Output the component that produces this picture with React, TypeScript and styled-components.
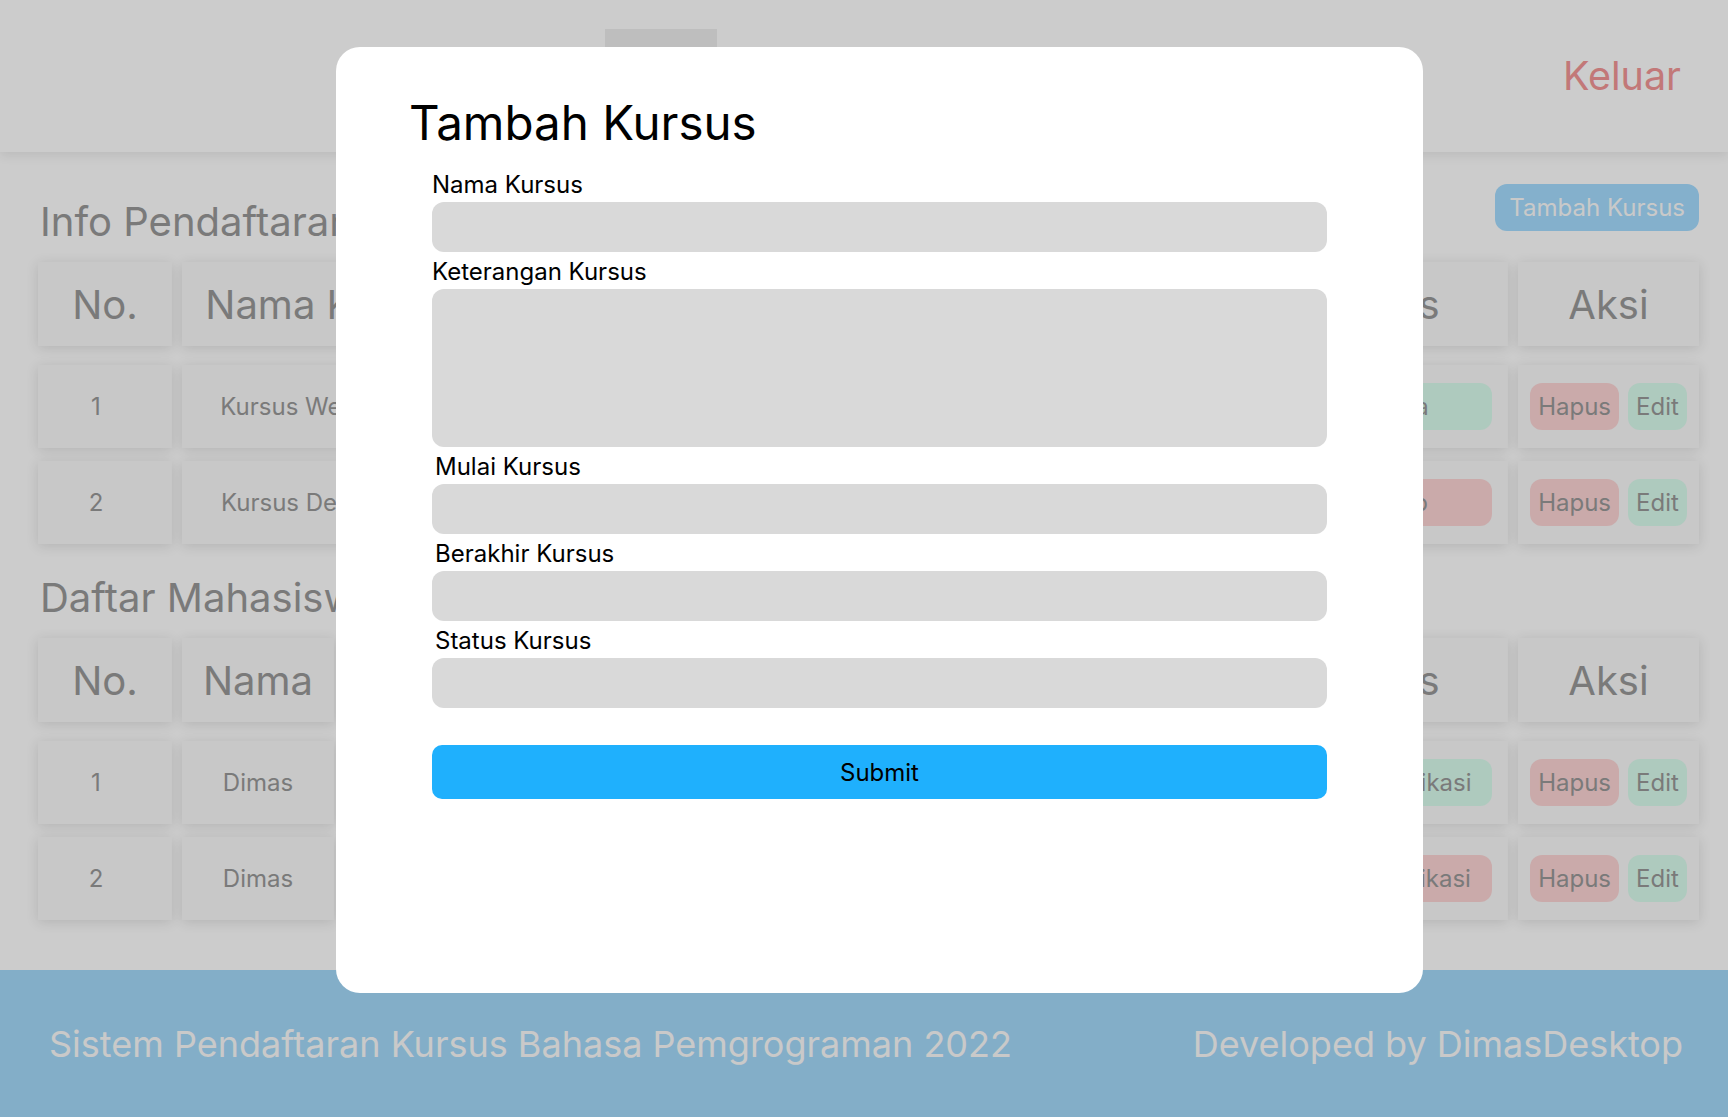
import styled, { createGlobalStyle } from 'styled-components';

const GlobalStyle = createGlobalStyle`
  * { box-sizing: border-box; }
  body {
    margin: 0;
    font-family: Inter, "Noto Sans", "Liberation Sans", sans-serif;
    background: #ffffff;
  }
`;

type Tone = 'ok' | 'bad';

const Page = styled.div`
  min-height: 100vh;
  display: flex;
  flex-direction: column;
  color: #999999;
`;

const Header = styled.header`
  height: 152px;
  display: grid;
  grid-template-columns: 1fr auto;
  align-items: center;
  padding: 0 47px 0 0;
  background: #ffffff;
  box-shadow: 0 4px 10px rgba(0, 0, 0, 0.08);
  position: relative;
  z-index: 1;
`;
const NavTab = styled.a`
  margin-left: 605px;
  width: 112px;
  height: 94px;
  display: flex;
  align-items: center;
  justify-content: center;
  background: #eeeeee;
  color: #999999;
  font-size: 24px;
  text-decoration: none;
`;
const Logout = styled.a`
  font-size: 39.5px;
  color: #f39696;
  text-decoration: none;
  cursor: pointer;
`;

const Main = styled.main`
  flex: 1;
  padding: 32px 29px 0 38px;
`;
const Section = styled.section`
  & + & {
    margin-top: 30px;
  }
`;
const SectionHead = styled.div`
  display: flex;
  justify-content: space-between;
  align-items: flex-start;
  margin-bottom: 16px;
`;
const Heading = styled.h2<{ $offset?: number }>`
  margin: ${(p) => p.$offset ?? 0}px 0 0 2px;
  font-size: 40px;
  font-weight: 400;
  line-height: 48px;
  color: #999999;
`;
const AddButton = styled.button`
  height: 47px;
  padding: 0 14px;
  border: none;
  border-radius: 12px;
  background: #a5ddff;
  color: #fcfcfc;
  font-family: inherit;
  font-size: 24px;
  cursor: pointer;
`;

const Grid = styled.div<{ $cols: string }>`
  display: grid;
  grid-template-columns: ${(p) => p.$cols};
  column-gap: 10px;
  row-gap: 13px;
`;
const HeadCell = styled.div`
  height: 84px;
  margin-bottom: 6px;
  display: flex;
  align-items: center;
  justify-content: center;
  background: #fafafa;
  box-shadow: 0 2px 12px rgba(0, 0, 0, 0.12);
  font-size: 40px;
  white-space: nowrap;
  overflow: hidden;
`;
const Cell = styled.div<{ $num?: boolean }>`
  height: 83px;
  padding: 0 ${(p) => (p.$num ? 34 : 16)}px 0 16px;
  display: flex;
  align-items: center;
  justify-content: center;
  gap: 9px;
  background: #fafafa;
  box-shadow: 0 2px 12px rgba(0, 0, 0, 0.12);
  font-size: 24px;
  white-space: nowrap;
  overflow: hidden;
`;
const Pill = styled.span<{ $tone: Tone; $wide?: boolean }>`
  height: 47px;
  padding: 0 8px;
  display: inline-flex;
  align-items: center;
  justify-content: center;
  flex: ${(p) => (p.$wide ? 1 : 'none')};
  border-radius: 12px;
  background: ${(p) => (p.$tone === 'ok' ? '#dafdee' : '#fdd5d5')};
  color: #999999;
  font-size: 24px;
  cursor: pointer;
`;

const Footer = styled.footer`
  height: 147px;
  padding: 0 45px 0 49px;
  display: flex;
  align-items: center;
  justify-content: space-between;
  background: #a4dafb;
  color: #fcfcfc;
  font-size: 36px;
`;

const Backdrop = styled.div`
  position: fixed;
  inset: 0;
  background: rgba(0, 0, 0, 0.2);
  z-index: 10;
`;
const Modal = styled.div`
  position: absolute;
  top: 47px;
  left: 336px;
  width: 1087px;
  height: 946px;
  padding: 47px 96px 0;
  border-radius: 24px;
  background: #ffffff;
  color: #000000;
`;
const Title = styled.h1`
  margin: 0 0 18px -23px;
  font-size: 47.5px;
  font-weight: 400;
  line-height: 58px;
`;
const Form = styled.form`
  display: flex;
  flex-direction: column;
  gap: 5px;
`;
const Field = styled.div`
  display: flex;
  flex-direction: column;
`;
const Label = styled.label<{ $indent?: boolean }>`
  margin: 0 0 3px ${(p) => (p.$indent ? 3 : 0)}px;
  font-size: 24px;
  line-height: 29px;
`;
const Input = styled.input`
  height: 50px;
  width: 100%;
  padding: 0 14px;
  border: none;
  border-radius: 12px;
  background: #d9d9d9;
  font-family: inherit;
  font-size: 22px;
  outline: none;
`;
const TextArea = styled.textarea`
  height: 158px;
  width: 100%;
  padding: 12px 14px;
  border: none;
  border-radius: 12px;
  background: #d9d9d9;
  font-family: inherit;
  font-size: 22px;
  resize: none;
  outline: none;
`;
const Submit = styled.button`
  margin-top: 32px;
  height: 54px;
  width: 100%;
  border: none;
  border-radius: 10px;
  background: #1fb0fd;
  color: #000000;
  font-family: inherit;
  font-size: 24px;
  cursor: pointer;
`;

type Row = { cells: string[]; status: string; tone: Tone };

const courseCols = '134px 298px 244px 244px 244px 256px 181px';
const courseHead = ['No.', 'Nama Kursus', 'Keterangan', 'Mulai', 'Berakhir', 'Status', 'Aksi'];
const courses: Row[] = [
  { cells: ['1', 'Kursus Web Design', 'Belajar HTML & CSS', '01-08-2022', '01-09-2022'], status: 'Tersedia', tone: 'ok' },
  { cells: ['2', 'Kursus Desain Web', 'Belajar UI/UX', '01-07-2022', '01-08-2022'], status: 'Tertutup', tone: 'bad' },
];

const studentCols = '134px 152px 444px 444px 256px 181px';
const studentHead = ['No.', 'Nama', 'Email', 'Kursus', 'Status', 'Aksi'];
const students: Row[] = [
  { cells: ['1', 'Dimas', 'dimas@gmail.com', 'Kursus Web Design'], status: 'Sudah Verifikasi', tone: 'ok' },
  { cells: ['2', 'Dimas', 'dimas@gmail.com', 'Kursus Desain Web'], status: 'Belum Verifikasi', tone: 'bad' },
];

function DataTable({ cols, head, rows }: { cols: string; head: string[]; rows: Row[] }) {
  return (
    <Grid $cols={cols}>
      {head.map((h) => (
        <HeadCell key={h}>{h}</HeadCell>
      ))}
      {rows.map((r) => [
        ...r.cells.map((c, i) => (
          <Cell key={`${r.cells[0]}-${i}`} $num={i === 0}>
            {c}
          </Cell>
        )),
        <Cell key={`${r.cells[0]}-status`}>
          <Pill $tone={r.tone} $wide>
            {r.status}
          </Pill>
        </Cell>,
        <Cell key={`${r.cells[0]}-aksi`}>
          <Pill $tone="bad">Hapus</Pill>
          <Pill $tone="ok">Edit</Pill>
        </Cell>,
      ])}
    </Grid>
  );
}

const fields = [
  { id: 'nama', label: 'Nama Kursus' },
  { id: 'ket', label: 'Keterangan Kursus', area: true },
  { id: 'mulai', label: 'Mulai Kursus', indent: true },
  { id: 'akhir', label: 'Berakhir Kursus', indent: true },
  { id: 'status', label: 'Status Kursus', indent: true },
];

export default function App() {
  return (
    <>
      <GlobalStyle />
      <Page>
        <Header>
          <NavTab>Kursus</NavTab>
          <Logout>Keluar</Logout>
        </Header>

        <Main>
          <Section>
            <SectionHead>
              <Heading $offset={14}>Info Pendaftaran Kursus</Heading>
              <AddButton>Tambah Kursus</AddButton>
            </SectionHead>
            <DataTable cols={courseCols} head={courseHead} rows={courses} />
          </Section>
          <Section>
            <SectionHead>
              <Heading>Daftar Mahasiswa</Heading>
            </SectionHead>
            <DataTable cols={studentCols} head={studentHead} rows={students} />
          </Section>
        </Main>

        <Footer>
          <span>Sistem Pendaftaran Kursus Bahasa Pemgrograman 2022</span>
          <span>Developed by DimasDesktop</span>
        </Footer>
      </Page>

      <Backdrop>
        <Modal role="dialog" aria-label="Tambah Kursus">
          <Title>Tambah Kursus</Title>
          <Form onSubmit={(e) => e.preventDefault()}>
            {fields.map((f) => (
              <Field key={f.id}>
                <Label htmlFor={f.id} $indent={f.indent}>
                  {f.label}
                </Label>
                {f.area ? <TextArea id={f.id} /> : <Input id={f.id} />}
              </Field>
            ))}
            <Submit type="submit">Submit</Submit>
          </Form>
        </Modal>
      </Backdrop>
    </>
  );
}
